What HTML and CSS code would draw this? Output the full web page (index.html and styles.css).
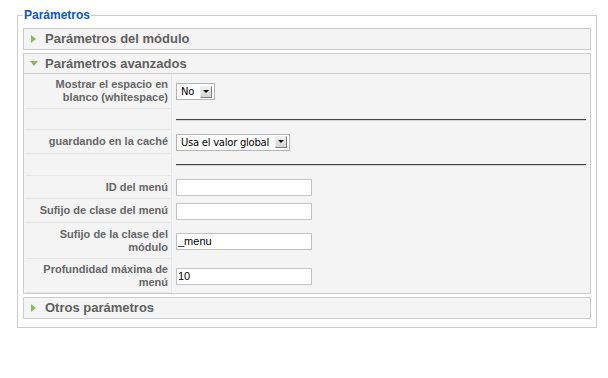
FILE: index.html
```html
<!DOCTYPE html>
<html lang="es">
<head>
<meta charset="utf-8">
<title>Parámetros</title>
<link rel="stylesheet" href="styles.css">
</head>
<body>
<div class="page">
  <fieldset class="params">
    <legend>Parámetros</legend>

    <div class="panel">
      <h3 class="toggler"><span class="arrow arrow-right"></span>Parámetros del módulo</h3>
    </div>

    <div class="panel panel-open">
      <h3 class="toggler"><span class="arrow arrow-down"></span>Parámetros avanzados</h3>
      <div class="content">
        <div class="row row-35">
          <div class="key">Mostrar el espacio en blanco (whitespace)</div>
          <div class="val"><span class="select select-short"><span class="stext">No</span><span class="sbtn"></span></span></div>
        </div>
        <div class="row row-21">
          <div class="key"></div>
          <div class="val"><div class="sep"></div></div>
        </div>
        <div class="row row-24">
          <div class="key">guardando en la caché</div>
          <div class="val"><span class="select select-long"><span class="stext">Usa el valor global</span><span class="sbtn"></span></span></div>
        </div>
        <div class="row row-22">
          <div class="key"></div>
          <div class="val"><div class="sep"></div></div>
        </div>
        <div class="row row-23">
          <div class="key">ID del menú</div>
          <div class="val"><input class="text" type="text" value=""></div>
        </div>
        <div class="row row-24">
          <div class="key">Sufijo de clase del menú</div>
          <div class="val"><input class="text" type="text" value=""></div>
        </div>
        <div class="row row-36">
          <div class="key">Sufijo de la clase del módulo</div>
          <div class="val"><input class="text" type="text" value="_menu"></div>
        </div>
        <div class="row row-34">
          <div class="key">Profundidad máxima de menú</div>
          <div class="val"><input class="text" type="text" value="10"></div>
        </div>
      </div>
    </div>

    <div class="panel">
      <h3 class="toggler"><span class="arrow arrow-right"></span>Otros parámetros</h3>
    </div>
  </fieldset>
</div>
</body>
</html>
```

FILE: styles.css
```css
html, body {
  margin: 0;
  padding: 0;
  background: #ffffff;
  font-family: "Liberation Sans", Arial, sans-serif;
}

.page {
  padding: 8px 11px 0 17px;
}

.params {
  margin: 0;
  min-width: 0;
  border: 1px solid #cccccc;
  padding: 6px 5px 8px 5px;
}

.params legend {
  padding: 0 1px;
  margin: 0;
  color: #0b55c4;
  font-weight: bold;
  font-size: 12px;
  line-height: 14px;
}

.panel {
  border: 1px solid #cccccc;
  background: #f4f4f4;
  margin-bottom: 3px;
}

.panel:last-child {
  margin-bottom: 0;
}

.toggler {
  position: relative;
  margin: 0;
  height: 20px;
  line-height: 20px;
  padding-left: 21px;
  font-size: 13px;
  font-weight: bold;
  color: #5f5f5f;
}

.panel-open .toggler {
  height: 19px;
  line-height: 19px;
  border-bottom: 1px solid #cccccc;
}

.arrow {
  position: absolute;
  width: 0;
  height: 0;
}

.arrow-right {
  left: 7px;
  top: 6px;
  border-left: 5px solid #86bd55;
  border-top: 4px solid transparent;
  border-bottom: 4px solid transparent;
}

.arrow-down {
  left: 6px;
  top: 7px;
  border-top: 5px solid #86bd55;
  border-left: 4px solid transparent;
  border-right: 4px solid transparent;
}

.content {
  display: flex;
  flex-direction: column;
}

.row {
  display: flex;
  box-sizing: border-box;
}

.row-21 { height: 21px; }
.row-22 { height: 22px; }
.row-23 { height: 23px; }
.row-24 { height: 24px; }
.row-34 { height: 34px; }
.row-35 { height: 35px; }
.row-36 { height: 36px; }

.key {
  box-sizing: border-box;
  width: 147px;
  margin-left: 1px;
  flex: none;
  display: flex;
  align-items: center;
  justify-content: flex-end;
  padding: 0 3px 0 4px;
  border-right: 1px solid #e6e6e6;
  border-bottom: 1px solid #e6e6e6;
  text-align: right;
  font-size: 11px;
  line-height: 13px;
  font-weight: bold;
  color: #666666;
}

.val {
  flex: 1;
  min-width: 0;
  display: flex;
  align-items: center;
  padding: 0 4px 0 4px;
}

.sep {
  flex: 1;
  height: 0;
  border-top: 1px solid #444444;
  border-bottom: 1px solid #d6d6d6;
}

.select {
  box-sizing: border-box;
  display: inline-flex;
  align-items: center;
  height: 17px;
  border: 1px solid #b4b4b4;
  background: #ffffff;
  font-family: "DejaVu Sans", sans-serif;
  font-size: 10px;
  letter-spacing: -0.25px;
  color: #000000;
}

.select-short { width: 39px; }
.select-long { width: 114px; }

.stext {
  padding-left: 4px;
  white-space: nowrap;
}

.sbtn {
  position: relative;
  flex: none;
  box-sizing: border-box;
  width: 12px;
  height: 12px;
  margin-left: auto;
  margin-right: 2px;
  background: linear-gradient(#f2f2f2, #d2d2d2);
  border-right: 1px solid #7d7d7d;
  border-bottom: 1px solid #7d7d7d;
  border-top: 1px solid #ececec;
  border-left: 1px solid #ececec;
}

.sbtn::after {
  content: "";
  position: absolute;
  left: 2px;
  top: 3px;
  width: 0;
  height: 0;
  border-top: 3px solid #000000;
  border-left: 3px solid transparent;
  border-right: 3px solid transparent;
}

.text {
  box-sizing: border-box;
  width: 136px;
  height: 17px;
  margin: 0;
  padding: 0 0 0 1px;
  border: 1px solid #c2c2c2;
  border-radius: 0;
  background: #ffffff;
  font-family: "Liberation Sans", Arial, sans-serif;
  font-size: 11px;
  line-height: 15px;
  color: #000000;
  outline: none;
}
```
